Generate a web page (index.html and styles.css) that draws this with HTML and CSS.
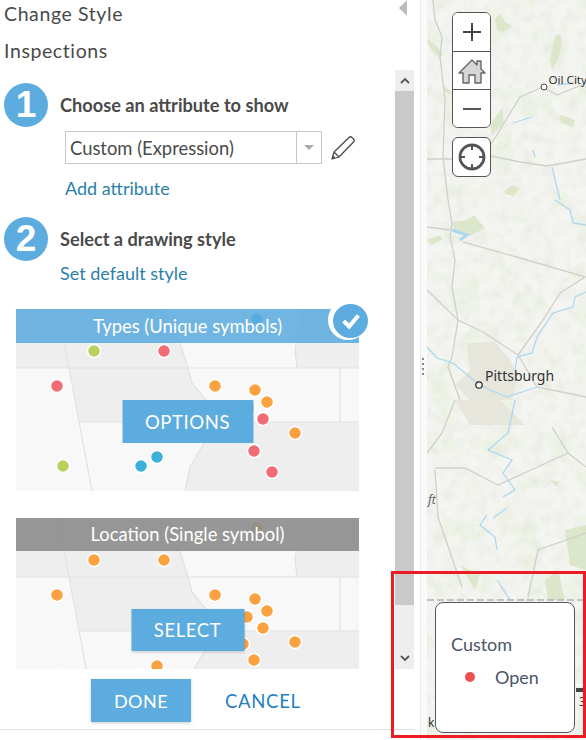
FILE: index.html
```html
<!DOCTYPE html>
<html lang="en">
<head>
  <meta charset="UTF-8">
  <title>Change Style</title>
  <link rel="stylesheet" href="styles.css">
</head>
<body>
  <svg class="defs" width="0" height="0">
    <filter id="hillshade" x="0" y="0" width="100%" height="100%">
      <feTurbulence type="fractalNoise" baseFrequency="0.09" numOctaves="3" seed="4"/>
      <feColorMatrix type="matrix" values="0 0 0 0 0.55  0 0 0 0 0.55  0 0 0 0 0.5  1.6 0 0 0 -0.62"/>
    </filter>
    <filter id="forest" x="0" y="0" width="100%" height="100%">
      <feTurbulence type="fractalNoise" baseFrequency="0.035" numOctaves="3" seed="11"/>
      <feColorMatrix type="matrix" values="0 0 0 0 0.82  0 0 0 0 0.89  0 0 0 0 0.74  0 7 0 0 -3.7"/>
    </filter>
    <symbol id="basemap" viewBox="0 0 343 182">
      <rect width="343" height="182" fill="#f8f8f8"/>
      <path d="M0 0H42L52 59H0Z" fill="#eee"/>
      <path d="M42 0H144L164 34L172 59L176 74L190 91L197 113H64Z" fill="#eee"/>
      <path d="M286 0L279 41L281 59H343V0Z" fill="#eee"/>
      <path d="M197 113H343V182H169L174 158L184 141L194 124Z" fill="#eee"/>
      <path d="M0 59H343M64 113H343M324 59V113M42 0L76 182M144 0L164 34L172 59L176 74L190 91L197 113L194 124L184 141L174 158L169 182M286 0L279 41L281 59" fill="none" stroke="#e1e1e1" stroke-width="1.2"/>
    </symbol>
  </svg>

  <div class="panel">
    <div class="panel-head">
      <div class="panel-title">Change Style</div>
      <div class="panel-title">Inspections</div>
      <span class="collapse"></span>
    </div>

    <div class="scroll-area">
      <div class="scroll-content">
        <div class="step">
          <span class="step-num">1</span>
          <h3>Choose an attribute to show</h3>
        </div>
        <div class="attr-row">
          <div class="select">
            <span class="select-text">Custom (Expression)</span>
            <span class="select-arrow"><i></i></span>
          </div>
          <svg class="pencil" width="26" height="26" viewBox="0 0 26 26">
            <path d="M2 24L4 17L19 2.5C20 1.5 21 1.5 22 2.5L23.5 4C24.5 5 24.5 6 23.5 7L9 22Z M4 17L9 22" fill="none" stroke="#4a4a4a" stroke-width="1.3" stroke-linejoin="round"/>
            <path d="M2 24L3 20.500L5.500 23Z" fill="#4a4a4a"/>
          </svg>
        </div>
        <a class="link add-attr">Add attribute</a>

        <div class="step step-two">
          <span class="step-num">2</span>
          <h3>Select a drawing style</h3>
        </div>
        <a class="link default-style">Set default style</a>

        <div class="card card-types">
          <svg class="card-map" width="343" height="182" viewBox="0 0 343 182">
            <use href="#basemap" width="343" height="182"/>
            <g stroke="#fff" stroke-width="1.5">
              <circle cx="241" cy="10" r="6.5" fill="#3fb0d6"/>
              <circle cx="78" cy="42" r="6.5" fill="#b7d15c"/>
              <circle cx="148" cy="42" r="6.5" fill="#f06c72"/>
              <circle cx="41" cy="77" r="6.5" fill="#f06c72"/>
              <circle cx="199" cy="77" r="6.5" fill="#fba140"/>
              <circle cx="239" cy="81" r="6.5" fill="#fba140"/>
              <circle cx="251" cy="93" r="6.5" fill="#fba140"/>
              <circle cx="232" cy="99" r="6.5" fill="#f06c72"/>
              <circle cx="247" cy="110" r="6.5" fill="#f06c72"/>
              <circle cx="279" cy="124" r="6.5" fill="#fba140"/>
              <circle cx="238" cy="142" r="6.5" fill="#f06c72"/>
              <circle cx="256" cy="163" r="6.5" fill="#f06c72"/>
              <circle cx="47" cy="157" r="6.5" fill="#b7d15c"/>
              <circle cx="125" cy="157" r="6.5" fill="#3bb0d8"/>
              <circle cx="141" cy="148" r="6.5" fill="#3bb0d8"/>
            </g>
          </svg>
          <div class="card-label label-active">Types (Unique symbols)</div>
          <button class="card-btn btn-options">OPTIONS</button>
        </div>
        <span class="check-badge">
          <span class="check-inner">
            <svg width="22" height="22" viewBox="0 0 24 24"><path d="M4 12L10 18L20 6" fill="none" stroke="#fff" stroke-width="4.500"/></svg>
          </span>
        </span>

        <div class="card card-location">
          <svg class="card-map" width="343" height="182" viewBox="0 0 343 182">
            <use href="#basemap" width="343" height="182"/>
            <g stroke="#fff" stroke-width="1.5" fill="#fba140">
              <circle cx="241" cy="10" r="6.5"/>
              <circle cx="78" cy="42" r="6.5"/>
              <circle cx="148" cy="42" r="6.5"/>
              <circle cx="41" cy="77" r="6.5"/>
              <circle cx="199" cy="77" r="6.5"/>
              <circle cx="239" cy="81" r="6.5"/>
              <circle cx="251" cy="93" r="6.5"/>
              <circle cx="231" cy="99" r="6.5"/>
              <circle cx="247" cy="110" r="6.5"/>
              <circle cx="279" cy="124" r="6.5"/>
              <circle cx="227" cy="126" r="6.5"/>
              <circle cx="238" cy="142" r="6.5"/>
              <circle cx="141" cy="148" r="6.5"/>
              <circle cx="47" cy="157" r="6.5"/>
              <circle cx="125" cy="157" r="6.5"/>
            </g>
          </svg>
          <div class="card-label label-muted">Location (Single symbol)</div>
          <button class="card-btn btn-select">SELECT</button>
        </div>
      </div>

      <div class="scrollbar">
        <span class="scroll-btn">
          <svg width="10" height="7" viewBox="0 0 10 7"><path d="M1 6L5 2L9 6" fill="none" stroke="#555" stroke-width="1.8"/></svg>
        </span>
        <span class="scroll-thumb"></span>
        <span class="scroll-rest">
          <svg width="10" height="7" viewBox="0 0 10 7"><path d="M1 1L5 5L9 1" fill="none" stroke="#555" stroke-width="1.8"/></svg>
        </span>
      </div>
    </div>

    <div class="panel-foot">
      <button class="done-btn">DONE</button>
      <a class="cancel-link">CANCEL</a>
    </div>
  </div>

  <div class="splitter"><span class="grip"></span></div>

  <div class="map">
    <svg class="map-art" width="159" height="740" viewBox="427 0 159 740">
      <rect x="427" y="0" width="159" height="740" fill="#f4f5f1"/>
      <rect x="427" y="0" width="159" height="740" filter="url(#forest)" opacity="0.55"/>
      <rect x="427" y="0" width="159" height="740" filter="url(#hillshade)" opacity="0.22"/>
      <g fill="#dbe6ca">
        <path d="M495 18L501 14L505 22L512 26L503 32L497 30Z"/>
        <path d="M427 40L436 45L443 55L440 57L431 50Z"/>
        <path d="M444 86L452 92L450 95L444 91Z"/>
        <path d="M555 36L560 34L562 42L558 60L552 70L550 60Z"/>
        <path d="M490 125L502 108L504 124L492 135Z"/>
        <path d="M560 115L575 120L573 127L561 123Z"/>
        <path d="M505 190L512 185L520 188L514 196L505 194Z"/>
        <path d="M452 222L468 220L474 215L485 228L470 236L455 232Z"/>
        <path d="M427 240L440 235L442 240L432 245Z"/>
        <path d="M550 480L560 482L556 487Z"/>
        <path d="M565 530L586 525V570L570 565Z"/>
        <path d="M545 580L558 570L565 600H548Z"/>
        <path d="M460 565L480 575L475 590Z"/>
      </g>
      <path d="M467 343L495 342L510 360L518 375L512 400L470 400L455 385L470 370Z" fill="#e6e6dc"/>
      <path d="M455 400L500 400L525 425H470Z" fill="#e6e6dc"/>
      <g fill="none" stroke="#cfcfcc" stroke-width="1.3">
        <path d="M433 0L435 20L442 37L440 57L445 100L443 157L448 200L452 223L450 237L455 260L452 287L458 320L452 357L448 367L460 400"/>
        <path d="M427 159H452M491 156L520 162L547 166L586 159"/>
        <path d="M492 143L520 97L543 87L557 95L586 83"/>
        <path d="M427 227L450 230M463 242L520 258L585 277L560 293L543 320L518 355"/>
        <path d="M427 290L458 320L483 332L518 355L537 387L586 397"/>
        <path d="M427 453L442 433L455 400M435 468H465L498 485L568 453M552 427L568 453L586 467"/>
        <path d="M435 470L438 517L462 587M586 533L538 550L528 597"/>
      </g>
      <g fill="none" stroke="#acd8ef" stroke-width="1.3">
        <path d="M555 200L570 210L573 223L586 225"/>
        <path d="M586 292L575 297L573 307L553 313L537 337L532 353L517 357L515 370"/>
        <path d="M427 347L437 358L453 363L477 383L490 390L507 397L537 387"/>
        <path d="M515 400L508 433L488 450L512 460L503 473L515 490L503 497"/>
        <path d="M507 508L493 518M487 515L480 525L495 537L497 550M497 580L510 600"/>
        <path d="M513 123L532 117M533 150L535 157M552 167L560 200M557 85L573 83"/>
        <path d="M452 230L467 235L460 240" stroke-width="3"/>
      </g>
      <path d="M427 600H586" stroke="#b5b0b5" stroke-width="1.5" stroke-dasharray="7 3"/>
      <circle cx="544" cy="87" r="3" fill="#fff" stroke="#444"/>
      <circle cx="479" cy="385" r="3.2" fill="#fff" stroke="#222" stroke-width="1.2"/>
      <text x="548.5" y="84" class="map-label oil">Oil City</text>
      <text x="485" y="381" class="map-label city">Pittsburgh</text>
      <text x="428" y="504" class="map-label ft">ft</text>
      <text x="428" y="727" class="map-label">k</text>
      <path d="M576 685H586" stroke="#fff" stroke-width="2"/>
      <path d="M576 690H586" stroke="#444" stroke-width="4"/>
      <text x="579" y="706" class="map-label">3</text>
    </svg>

    <div class="zoom-tools">
      <div class="tool-group">
        <button class="tool-btn">
          <svg width="20" height="20" viewBox="0 0 20 20"><path d="M10 1V19M1 10H19" stroke="#444" stroke-width="2"/></svg>
        </button>
        <button class="tool-btn">
          <svg width="30" height="30" viewBox="0 0 30 30">
            <path d="M2 17L15 4L20 9V5H24V13L28 17H24V27H18V19H12V27H6V17Z" fill="#d6d6d6" stroke="#666" stroke-width="1.4" stroke-linejoin="round"/>
          </svg>
        </button>
        <button class="tool-btn">
          <svg width="20" height="20" viewBox="0 0 20 20"><path d="M1 10H19" stroke="#555" stroke-width="2"/></svg>
        </button>
      </div>
      <button class="tool-btn tool-solo">
        <svg width="30" height="30" viewBox="0 0 30 30">
          <circle cx="15" cy="15" r="12" fill="none" stroke="#555" stroke-width="2.800"/>
          <path d="M15 3V8M15 22V27M3 15H8M22 15H27" stroke="#555" stroke-width="2"/>
        </svg>
      </button>
    </div>

    <div class="legend">
      <div class="legend-title">Custom</div>
      <div class="legend-row">
        <span class="legend-dot"></span>
        <span>Open</span>
      </div>
    </div>
  </div>

  <div class="callout"></div>
</body>
</html>
```

FILE: styles.css
```css
* {
  box-sizing: border-box;
  margin: 0;
  padding: 0;
}

html, body {
  height: 740px;
  overflow: hidden;
}

body {
  font-family: 'Lato', 'Open Sans', sans-serif;
  background: #fff;
  color: #4a4a4a;
  display: flex;
  position: relative;
}

.defs {
  position: absolute;
}

/* Left panel */
.panel {
  width: 415px;
  height: 730px;
  border-bottom: 1px solid #e3e3e3;
  display: flex;
  flex-direction: column;
  flex-shrink: 0;
}

.panel-head {
  height: 70px;
  padding: 2px 0 0 4px;
  position: relative;
}

.panel-title {
  font-size: 19.5px;
  letter-spacing: 0.6px;
  line-height: 24px;
  margin-bottom: 13px;
  color: #4a4a4a;
}

.collapse {
  position: absolute;
  top: 0;
  right: 8px;
  border-style: solid;
  border-width: 8px 8px 8px 0;
  border-color: transparent #bbb transparent transparent;
}

.scroll-area {
  display: flex;
  height: 599px;
}

.scroll-content {
  width: 395px;
  height: 599px;
  overflow: hidden;
  position: relative;
}

.step {
  display: flex;
  align-items: center;
  gap: 12px;
  margin: 13px 0 0 4px;
}

.step-two {
  margin-top: 17px;
}

.step-num {
  width: 44px;
  height: 44px;
  border-radius: 50%;
  background: #5dacdf;
  color: #fff;
  font-family: 'Liberation Sans', sans-serif;
  font-weight: 700;
  font-size: 37px;
  line-height: 44px;
  text-align: center;
  flex-shrink: 0;
}

.step h3 {
  font-size: 18.2px;
  font-weight: 700;
  color: #4a4a4a;
}

.attr-row {
  display: flex;
  align-items: center;
  gap: 8px;
  margin: 4px 0 0 65px;
}

.select {
  width: 257px;
  height: 33px;
  border: 1px solid #c8c8c8;
  display: flex;
  align-items: center;
}

.select-text {
  flex: 1;
  padding-left: 4px;
  font-size: 18.4px;
}

.select-arrow {
  width: 25px;
  height: 31px;
  border-left: 1px solid #c8c8c8;
  display: flex;
  align-items: center;
  justify-content: center;
}

.select-arrow i {
  border-style: solid;
  border-width: 5px 5px 0 5px;
  border-color: #aaa transparent transparent transparent;
}

.link {
  display: block;
  color: #2b7fa9;
  font-size: 18px;
  line-height: 24px;
}

.add-attr {
  margin: 12px 0 0 65px;
}

.default-style {
  margin: 0 0 0 60px;
}

/* Style cards */
.card {
  width: 343px;
  margin-left: 16px;
  position: relative;
  overflow: hidden;
}

.card-types {
  height: 182px;
  margin-top: 24px;
}

.card-location {
  height: 151px;
  margin-top: 27px;
}

.card-map {
  display: block;
}

.card-label {
  position: absolute;
  top: 0;
  left: 0;
  right: 0;
  height: 34px;
  line-height: 34px;
  text-align: center;
  color: #fff;
  font-size: 18.4px;
}

.label-active {
  background: rgba(93, 172, 223, 0.88);
}

.label-muted {
  height: 33px;
  line-height: 33px;
  background: rgba(140, 140, 140, 0.9);
}

.card-btn {
  position: absolute;
  left: 50%;
  transform: translateX(-50%);
  border: none;
  background: #5dacdf;
  color: #fff;
  font-family: inherit;
  font-size: 18.5px;
  letter-spacing: 0.6px;
}

.btn-options {
  top: 91px;
  width: 131px;
  height: 43px;
}

.btn-select {
  top: 91px;
  width: 113px;
  height: 42px;
  box-shadow: 0 1px 3px rgba(0, 0, 0, 0.2);
}

.check-badge {
  position: absolute;
  left: 328px;
  top: 230px;
  width: 40px;
  height: 40px;
  border-radius: 50%;
  background: #fff;
  padding-top: 4px;
  display: flex;
  justify-content: flex-end;
  align-items: flex-start;
}

.check-inner {
  width: 35px;
  height: 34px;
  border-radius: 50%;
  background: #5dacdf;
  display: flex;
  align-items: center;
  justify-content: center;
}

/* Scrollbar */
.scrollbar {
  width: 19px;
  height: 599px;
  display: flex;
  flex-direction: column;
  background: #eee;
}

.scroll-btn {
  height: 21px;
  display: flex;
  align-items: center;
  justify-content: center;
}

.scroll-thumb {
  height: 514px;
  background: #c9c9c9;
}

.scroll-rest {
  flex: 1;
  display: flex;
  align-items: flex-end;
  justify-content: center;
  padding-bottom: 7px;
}

.panel-foot {
  height: 60px;
  display: flex;
  align-items: flex-start;
  padding: 10px 0 0 91px;
  gap: 34px;
}

.done-btn {
  width: 100px;
  height: 43px;
  border: none;
  background: #5dacdf;
  color: #fff;
  font-family: inherit;
  font-size: 18px;
  letter-spacing: 0.5px;
  box-shadow: 0 1px 3px rgba(0, 0, 0, 0.2);
}

.cancel-link {
  color: #1f7fc4;
  font-size: 18.5px;
  letter-spacing: 0.7px;
  line-height: 45px;
}

/* Splitter */
.splitter {
  width: 12px;
  height: 740px;
  flex-shrink: 0;
  display: flex;
  align-items: flex-start;
  justify-content: center;
  background: linear-gradient(90deg, #fff 5px, #e9e9e9 5px, #e9e9e9 6px, #fafafa 6px);
}

.grip {
  width: 2px;
  height: 20px;
  margin: 358px 0 0 3px;
  background: repeating-linear-gradient(#888 0 2px, transparent 2px 5px);
}

/* Map */
.map {
  flex: 1;
  position: relative;
  height: 740px;
  overflow: hidden;
}

.map-art {
  display: block;
}

.map-label {
  font-family: 'Noto Sans', sans-serif;
  font-size: 12px;
  fill: #333;
}

.map-label.oil {
  font-size: 11.6px;
}

.map-label.city {
  font-size: 14px;
}

.map-label.ft {
  font-style: italic;
  fill: #666;
}

.zoom-tools {
  position: absolute;
  left: 25px;
  top: 12px;
  display: flex;
  flex-direction: column;
  gap: 9px;
}

.tool-group {
  width: 39px;
  border: 1px solid #555;
  border-radius: 6px;
  background: #fff;
  overflow: hidden;
}

.tool-btn {
  display: flex;
  align-items: center;
  justify-content: center;
  width: 100%;
  height: 38px;
  border: none;
  background: #fff;
}

.tool-btn + .tool-btn {
  border-top: 1px solid #555;
}

.tool-solo {
  width: 39px;
  height: 40px;
  border: 1px solid #555;
  border-radius: 6px;
}

.legend {
  position: absolute;
  left: 8px;
  top: 602px;
  width: 140px;
  height: 131px;
  background: #fff;
  border: 1px solid #555;
  border-radius: 8px;
  padding: 30px 0 0 15px;
  font-size: 18px;
  color: #4a5568;
}

.legend-row {
  display: flex;
  align-items: center;
  gap: 20px;
  margin: 11px 0 0 14px;
}

.legend-dot {
  width: 10px;
  height: 10px;
  border-radius: 50%;
  background: #ee4f54;
}

.callout {
  position: absolute;
  left: 391px;
  top: 571px;
  width: 195px;
  height: 167px;
  border: 3px solid #ed1c24;
}
```
